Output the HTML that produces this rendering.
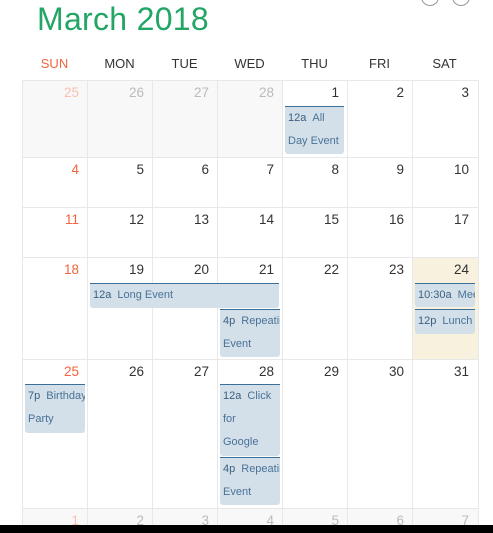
<!DOCTYPE html><html><head><style>
html,body{margin:0;width:493px;height:533px;overflow:hidden}
body{background:#fff;position:relative;font-family:"Liberation Sans",sans-serif}
.t{position:absolute;left:37px;top:1px;font-size:32px;color:#22a565;letter-spacing:.3px}
.h{position:absolute;top:56px;width:65px;text-align:center;font-size:13px;color:#333}
.c{position:absolute}
.l{position:absolute;background:#e8e8e8}
.n{position:absolute;font-size:13.5px;color:#333;text-align:right;width:57px}
.e{position:absolute;box-sizing:border-box;background:#d3e0e9;border-top:1px solid #3a6f9a;border-radius:0 0 3px 3px;font-size:11px;line-height:23px;color:#4a7298;padding-left:3px;overflow:hidden;white-space:nowrap}
.e b{color:#3a5f80;font-weight:normal;margin-right:6px}
.circ{position:absolute;top:-12px;width:16px;height:16px;border:1.5px solid #999;border-radius:50%}
</style></head><body>
<div class="t">March 2018</div>
<div class="circ" style="left:421px"></div><div class="circ" style="left:452px"></div>
<div class="h" style="left:22px;color:#f2643c">SUN</div>
<div class="h" style="left:87px">MON</div>
<div class="h" style="left:152px">TUE</div>
<div class="h" style="left:217px">WED</div>
<div class="h" style="left:282px">THU</div>
<div class="h" style="left:347px">FRI</div>
<div class="h" style="left:412px">SAT</div>
<div id="g"></div>
<script>
var xs=[22,87,152,217,282,347,412,478],ys=[80,157,207,257,359,508,533];
var nums=[[25,26,27,28,1,2,3],[4,5,6,7,8,9,10],[11,12,13,14,15,16,17],[18,19,20,21,22,23,24],[25,26,27,28,29,30,31],[1,2,3,4,5,6,7]];
var h='';
for(var r=0;r<6;r++)for(var c=0;c<7;c++){
var other=(r==0&&c<4)||r==5;var bg=other?'#f8f8f8':(r==3&&c==6?'#f8f1de':'#fff');
h+='<div class="c" style="left:'+xs[c]+'px;top:'+ys[r]+'px;width:'+(xs[c+1]-xs[c])+'px;height:'+(ys[r+1]-ys[r])+'px;background:'+bg+'"></div>';
var col=c==0?(other?'#f7c0b0':'#f2643c'):(other?'#bbb':'#333');
h+='<div class="n" style="left:'+xs[c]+'px;top:'+(ys[r]+5)+'px;color:'+col+'">'+nums[r][c]+'</div>';}
for(var i=0;i<xs.length;i++)h+='<div class="l" style="left:'+xs[i]+'px;top:80px;width:1px;height:453px"></div>';
for(var j=0;j<6;j++)h+='<div class="l" style="left:22px;top:'+ys[j]+'px;width:457px;height:1px"></div>';
document.getElementById('g').innerHTML=h;
</script>
<div class="e" style="left:285px;top:106px;width:59px;height:48px;white-space:normal"><b>12a</b>All Day Event</div>
<div class="e" style="left:90px;top:283px;width:189px;height:25px"><b>12a</b>Long Event</div>
<div class="e" style="left:220px;top:309px;width:60px;height:48px"><b>4p</b>Repeating<br>Event</div>
<div class="e" style="left:415px;top:283px;width:60px;height:24px"><b>10:30a</b>Meeting</div>
<div class="e" style="left:415px;top:309px;width:60px;height:25px"><b>12p</b>Lunch</div>
<div class="e" style="left:25px;top:384px;width:60px;height:49px"><b>7p</b>Birthday<br>Party</div>
<div class="e" style="left:220px;top:384px;width:60px;height:72px"><b>12a</b>Click<br>for<br>Google</div>
<div class="e" style="left:220px;top:457px;width:60px;height:48px"><b>4p</b>Repeating<br>Event</div>
<div style="position:absolute;left:0;top:525px;width:493px;height:8px;background:#000"></div>
</body></html>
